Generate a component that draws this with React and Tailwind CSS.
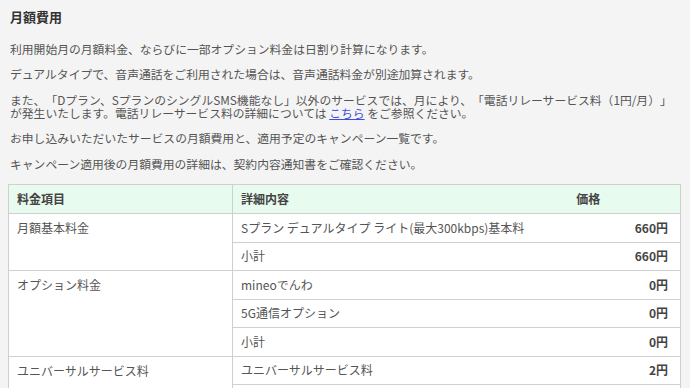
import React from "react";

const font = { fontFamily: '"Noto Sans CJK JP", "Noto Sans", sans-serif' };

const groups = [
  {
    item: "月額基本料金",
    rows: [
      ["Sプラン デュアルタイプ ライト(最大300kbps)基本料", "660円"],
      ["小計", "660円"],
    ],
  },
  {
    item: "オプション料金",
    rows: [
      ["mineoでんわ", "0円"],
      ["5G通信オプション", "0円"],
      ["小計", "0円"],
    ],
  },
  {
    item: "ユニバーサルサービス料",
    rows: [
      ["ユニバーサルサービス料", "2円"],
      ["小計", "2円"],
    ],
  },
];

export default function App() {
  return (
    <div
      className="min-h-[388px] w-[690px] bg-[#f4f4f4] px-2 pt-[8px] pb-6 text-[#555555] [text-spacing-trim:space-all]"
      style={font}
    >
      <h2 className="pl-[2px] text-[13px] font-bold leading-[18px] text-[#333333]">
        月額費用
      </h2>
      <div className="mt-[15.5px] pl-[2px] text-[11.8px] leading-[13px]">
        <p className="mb-[12.5px]">
          利用開始月の月額料金、ならびに一部オプション料金は日割り計算になります。
        </p>
        <p className="mb-[12.5px]">
          デュアルタイプで、音声通話をご利用された場合は、音声通話料金が別途加算されます。
        </p>
        <p className="mb-[12.5px] whitespace-nowrap">
          また、「Dプラン、SプランのシングルSMS機能なし」以外のサービスでは、月により、「電話リレーサービス料（1円/月）」
          <br />
          が発生いたします。電話リレーサービス料の詳細については{" "}
          <a href="#" className="text-[#3b4ce0] underline">
            こちら
          </a>{" "}
          をご参照ください。
        </p>
        <p className="mb-[12.5px]">
          お申し込みいただいたサービスの月額費用と、適用予定のキャンペーン一覧です。
        </p>
        <p className="mb-[14.5px]">
          キャンペーン適用後の月額費用の詳細は、契約内容通知書をご確認ください。
        </p>
      </div>
      <table className="w-[673px] table-fixed border-collapse bg-white text-[12px]">
        <colgroup>
          <col className="w-[224px]" />
          <col className="w-[264px]" />
          <col />
        </colgroup>
        <thead>
          <tr className="h-[29px] bg-[#e8fbef] text-[#444444]">
            <th className="border border-[#cfcfcf] px-2 text-left font-bold">
              料金項目
            </th>
            <th className="border-y border-[#cfcfcf] px-2 text-left font-bold">
              詳細内容
            </th>
            <th className="border-y border-r border-[#cfcfcf] px-2 text-center font-bold">
              価格
            </th>
          </tr>
        </thead>
        <tbody>
          {groups.map((g) =>
            g.rows.map(([label, price], i) => (
              <tr key={g.item + i} className="h-[28.5px]">
                {i === 0 && (
                  <td
                    rowSpan={g.rows.length}
                    className="border border-[#cfcfcf] px-2 pt-[5px] align-top"
                  >
                    {g.item}
                  </td>
                )}
                <td className="border-y border-[#cfcfcf] px-2 whitespace-nowrap">
                  {label}
                </td>
                <td className="border-y border-r border-[#cfcfcf] pr-[12px] text-right font-bold text-[#444444]">
                  {price}
                </td>
              </tr>
            ))
          )}
        </tbody>
      </table>
    </div>
  );
}
